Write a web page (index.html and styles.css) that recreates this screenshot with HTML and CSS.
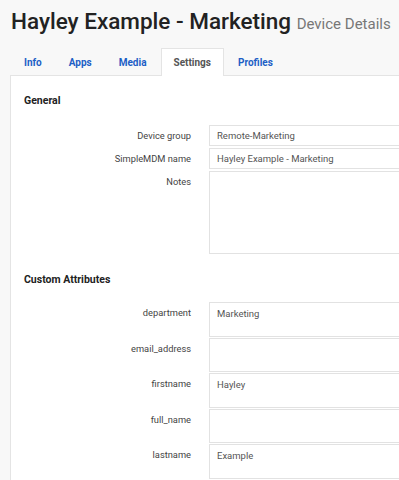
FILE: index.html
```html
<!doctype html>
<html>
 <head>
  <title>Hayley Example - Marketing</title>
  <link rel="stylesheet" href="styles.css">
 </head>
 <body>
  <div class="page">
   <h1>Hayley Example - Marketing <small>Device Details</small></h1>
   <ul class="tabs">
    <li><a href="#">Info</a></li>
    <li><a href="#">Apps</a></li>
    <li><a href="#">Media</a></li>
    <li class="active"><a href="#">Settings</a></li>
    <li><a href="#">Profiles</a></li>
   </ul>
   <div class="panel">
    <h3>General</h3>
    <div class="form-row">
     <label>Device group</label>
     <div class="field small">Remote-Marketing</div>
    </div>
    <div class="form-row">
     <label>SimpleMDM name</label>
     <div class="field small">Hayley Example - Marketing</div>
    </div>
    <div class="form-row">
     <label>Notes</label>
     <div class="field notes"></div>
    </div>

    <h3 class="section">Custom Attributes</h3>
    <div class="form-row attr">
     <label>department</label>
     <div class="field">Marketing</div>
    </div>
    <div class="form-row attr">
     <label>email_address</label>
     <div class="field"></div>
    </div>
    <div class="form-row attr">
     <label>firstname</label>
     <div class="field">Hayley</div>
    </div>
    <div class="form-row attr">
     <label>full_name</label>
     <div class="field"></div>
    </div>
    <div class="form-row attr">
     <label>lastname</label>
     <div class="field">Example</div>
    </div>
   </div>
  </div>
 </body>
</html>
```

FILE: styles.css
```css
html, body {
  margin: 0;
  overflow: hidden;
}

body {
  font-family: Roboto, "Liberation Sans", Arial, sans-serif;
  background-color: #f8f8f8;
  color: #333;
}

.page {
  width: 470px;
  padding-top: 7px;
}

h1 {
  margin: 0 0 0 11px;
  font-size: 22.5px;
  font-weight: 500;
  line-height: 28px;
  color: #222;
  white-space: nowrap;
}

h1 small {
  font-size: 15px;
  font-weight: 400;
  color: #777;
}

.tabs {
  list-style: none;
  display: flex;
  margin: 10px 0 0 11px;
  padding: 0;
}

.tabs li {
  margin-right: 1px;
  margin-bottom: -1px;
  border: 1px solid transparent;
  border-bottom: none;
}

.tabs a {
  display: block;
  padding: 1px 12px 0;
  line-height: 26px;
  font-size: 10px;
  font-weight: bold;
  color: #1d5fc6;
  text-decoration: none;
}

.tabs li.active {
  background-color: #fff;
  border-color: #e4e4e4;
}

.tabs li.active a {
  color: #555;
}

.panel {
  margin-left: 10px;
  background-color: #fff;
  border: 1px solid #e4e4e4;
  padding: 18px 0 40px 13px;
}

.panel h3 {
  margin: 0 0 17px;
  font-size: 10.5px;
  line-height: 14px;
  font-weight: bold;
  color: #222;
}

.panel h3.section {
  margin-top: 19px;
  margin-bottom: 15px;
}

.form-row {
  display: flex;
  align-items: flex-start;
  margin-bottom: 2px;
}

.form-row label {
  flex-shrink: 0;
  width: 167px;
  margin-right: 18px;
  text-align: right;
  font-size: 9.3px;
  line-height: 14px;
  padding-top: 4px;
  color: #444;
}

.field {
  flex-shrink: 0;
  width: 260px;
  height: 32px;
  border: 1px solid #e2e2e2;
  box-sizing: border-box;
  padding: 4px 7px;
  font-size: 9.5px;
  line-height: 14px;
  color: #555;
}

.field.small {
  height: 21px;
  padding-top: 3px;
}

.field.notes {
  height: 83px;
}

.form-row.attr {
  margin-bottom: 1px;
}

.form-row.attr .field {
  height: 34.5px;
}
```
